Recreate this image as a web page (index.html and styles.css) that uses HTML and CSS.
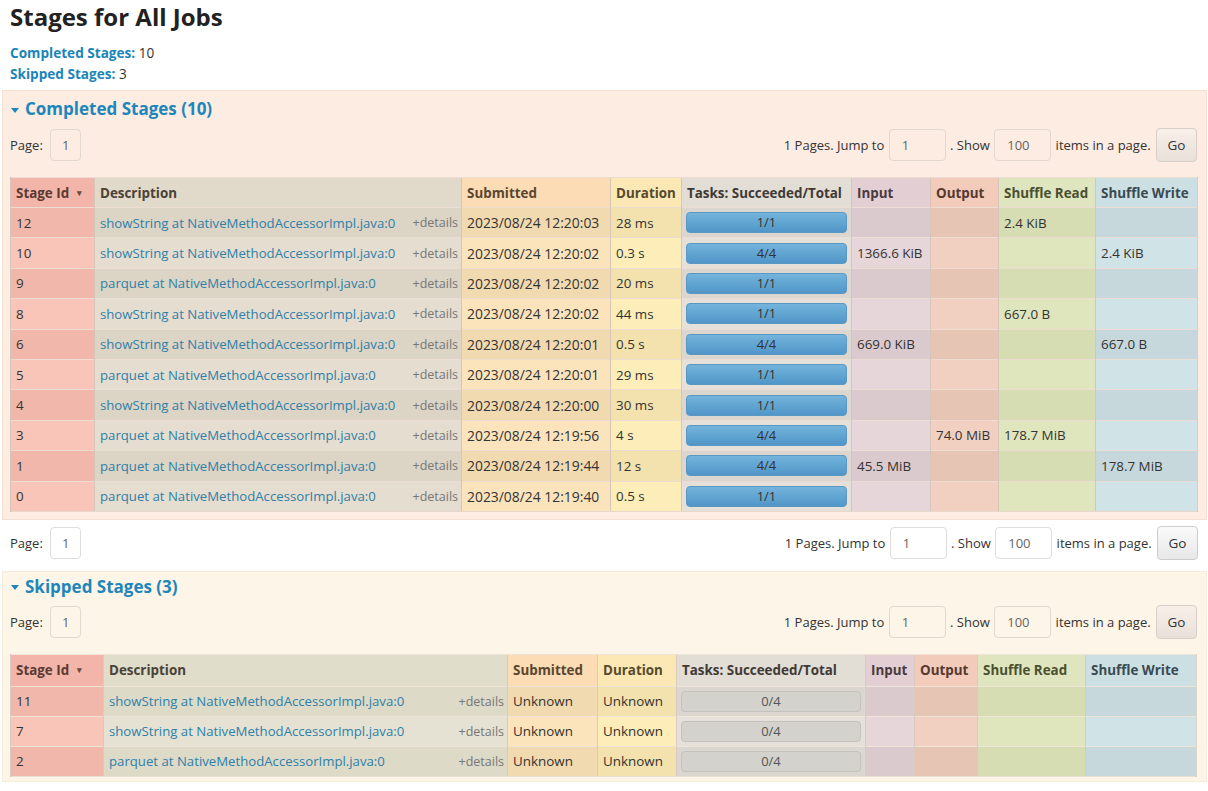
FILE: index.html
```html
<!DOCTYPE html>
<html>
<head>
<meta charset="utf-8">
<title>Stages for All Jobs</title>
<link rel="stylesheet" href="styles.css">
</head>
<body>
<div class="page">
  <h3 class="title">Stages for All Jobs</h3>
  <ul class="summary">
    <li><a class="sum-link">Completed Stages:</a> 10</li>
    <li><a class="sum-link">Skipped Stages:</a> 3</li>
  </ul>

  <section class="box box-completed">
    <h4 class="box-head"><span class="caret"></span>Completed Stages (10)</h4>
    <div class="pager">
      <div class="pager-left">Page: <span class="inp inp-page">1</span></div>
      <div class="pager-right">1 Pages. Jump to <span class="inp inp-jump">1</span> . Show <span class="inp inp-jump">100</span> items in a page. <span class="btn">Go</span></div>
    </div>
    <table class="stages">
      <colgroup>
        <col class="w-id"><col class="w-desc"><col class="w-sub"><col class="w-dur"><col class="w-task"><col class="w-in"><col class="w-out"><col class="w-sr"><col class="w-sw">
      </colgroup>
      <thead>
        <tr>
          <th class="c-id">Stage Id <span class="sort">&#9662;</span></th>
          <th class="c-desc">Description</th>
          <th class="c-sub">Submitted</th>
          <th class="c-dur">Duration</th>
          <th class="c-task">Tasks: Succeeded/Total</th>
          <th class="c-in">Input</th>
          <th class="c-out">Output</th>
          <th class="c-sr">Shuffle Read</th>
          <th class="c-sw">Shuffle Write</th>
        </tr>
      </thead>
      <tbody>
        <tr><td class="c-id">12</td><td class="c-desc"><div class="desc"><a class="dlink">showString at NativeMethodAccessorImpl.java:0</a><span class="details">+details</span></div></td><td class="c-sub">2023/08/24 12:20:03</td><td class="c-dur">28 ms</td><td class="c-task"><div class="bar">1/1</div></td><td class="c-in"></td><td class="c-out"></td><td class="c-sr">2.4 KiB</td><td class="c-sw"></td></tr>
        <tr><td class="c-id">10</td><td class="c-desc"><div class="desc"><a class="dlink">showString at NativeMethodAccessorImpl.java:0</a><span class="details">+details</span></div></td><td class="c-sub">2023/08/24 12:20:02</td><td class="c-dur">0.3 s</td><td class="c-task"><div class="bar">4/4</div></td><td class="c-in">1366.6 KiB</td><td class="c-out"></td><td class="c-sr"></td><td class="c-sw">2.4 KiB</td></tr>
        <tr><td class="c-id">9</td><td class="c-desc"><div class="desc"><a class="dlink">parquet at NativeMethodAccessorImpl.java:0</a><span class="details">+details</span></div></td><td class="c-sub">2023/08/24 12:20:02</td><td class="c-dur">20 ms</td><td class="c-task"><div class="bar">1/1</div></td><td class="c-in"></td><td class="c-out"></td><td class="c-sr"></td><td class="c-sw"></td></tr>
        <tr><td class="c-id">8</td><td class="c-desc"><div class="desc"><a class="dlink">showString at NativeMethodAccessorImpl.java:0</a><span class="details">+details</span></div></td><td class="c-sub">2023/08/24 12:20:02</td><td class="c-dur">44 ms</td><td class="c-task"><div class="bar">1/1</div></td><td class="c-in"></td><td class="c-out"></td><td class="c-sr">667.0 B</td><td class="c-sw"></td></tr>
        <tr><td class="c-id">6</td><td class="c-desc"><div class="desc"><a class="dlink">showString at NativeMethodAccessorImpl.java:0</a><span class="details">+details</span></div></td><td class="c-sub">2023/08/24 12:20:01</td><td class="c-dur">0.5 s</td><td class="c-task"><div class="bar">4/4</div></td><td class="c-in">669.0 KiB</td><td class="c-out"></td><td class="c-sr"></td><td class="c-sw">667.0 B</td></tr>
        <tr><td class="c-id">5</td><td class="c-desc"><div class="desc"><a class="dlink">parquet at NativeMethodAccessorImpl.java:0</a><span class="details">+details</span></div></td><td class="c-sub">2023/08/24 12:20:01</td><td class="c-dur">29 ms</td><td class="c-task"><div class="bar">1/1</div></td><td class="c-in"></td><td class="c-out"></td><td class="c-sr"></td><td class="c-sw"></td></tr>
        <tr><td class="c-id">4</td><td class="c-desc"><div class="desc"><a class="dlink">showString at NativeMethodAccessorImpl.java:0</a><span class="details">+details</span></div></td><td class="c-sub">2023/08/24 12:20:00</td><td class="c-dur">30 ms</td><td class="c-task"><div class="bar">1/1</div></td><td class="c-in"></td><td class="c-out"></td><td class="c-sr"></td><td class="c-sw"></td></tr>
        <tr><td class="c-id">3</td><td class="c-desc"><div class="desc"><a class="dlink">parquet at NativeMethodAccessorImpl.java:0</a><span class="details">+details</span></div></td><td class="c-sub">2023/08/24 12:19:56</td><td class="c-dur">4 s</td><td class="c-task"><div class="bar">4/4</div></td><td class="c-in"></td><td class="c-out">74.0 MiB</td><td class="c-sr">178.7 MiB</td><td class="c-sw"></td></tr>
        <tr><td class="c-id">1</td><td class="c-desc"><div class="desc"><a class="dlink">parquet at NativeMethodAccessorImpl.java:0</a><span class="details">+details</span></div></td><td class="c-sub">2023/08/24 12:19:44</td><td class="c-dur">12 s</td><td class="c-task"><div class="bar">4/4</div></td><td class="c-in">45.5 MiB</td><td class="c-out"></td><td class="c-sr"></td><td class="c-sw">178.7 MiB</td></tr>
        <tr><td class="c-id">0</td><td class="c-desc"><div class="desc"><a class="dlink">parquet at NativeMethodAccessorImpl.java:0</a><span class="details">+details</span></div></td><td class="c-sub">2023/08/24 12:19:40</td><td class="c-dur">0.5 s</td><td class="c-task"><div class="bar">1/1</div></td><td class="c-in"></td><td class="c-out"></td><td class="c-sr"></td><td class="c-sw"></td></tr>
      </tbody>
    </table>
  </section>

  <div class="pager pager-outside">
    <div class="pager-left">Page: <span class="inp inp-page">1</span></div>
    <div class="pager-right">1 Pages. Jump to <span class="inp inp-jump">1</span> . Show <span class="inp inp-jump">100</span> items in a page. <span class="btn">Go</span></div>
  </div>

  <section class="box box-skipped">
    <h4 class="box-head"><span class="caret"></span>Skipped Stages (3)</h4>
    <div class="pager">
      <div class="pager-left">Page: <span class="inp inp-page">1</span></div>
      <div class="pager-right">1 Pages. Jump to <span class="inp inp-jump">1</span> . Show <span class="inp inp-jump">100</span> items in a page. <span class="btn">Go</span></div>
    </div>
    <table class="stages skipped">
      <colgroup>
        <col class="s-id"><col class="s-desc"><col class="s-sub"><col class="s-dur"><col class="s-task"><col class="s-in"><col class="s-out"><col class="s-sr"><col class="s-sw">
      </colgroup>
      <thead>
        <tr>
          <th class="c-id">Stage Id <span class="sort">&#9662;</span></th>
          <th class="c-desc">Description</th>
          <th class="c-sub">Submitted</th>
          <th class="c-dur">Duration</th>
          <th class="c-task">Tasks: Succeeded/Total</th>
          <th class="c-in">Input</th>
          <th class="c-out">Output</th>
          <th class="c-sr">Shuffle Read</th>
          <th class="c-sw">Shuffle Write</th>
        </tr>
      </thead>
      <tbody>
        <tr><td class="c-id">11</td><td class="c-desc"><div class="desc"><a class="dlink">showString at NativeMethodAccessorImpl.java:0</a><span class="details">+details</span></div></td><td class="c-sub">Unknown</td><td class="c-dur">Unknown</td><td class="c-task"><div class="bar bar-empty">0/4</div></td><td class="c-in"></td><td class="c-out"></td><td class="c-sr"></td><td class="c-sw"></td></tr>
        <tr><td class="c-id">7</td><td class="c-desc"><div class="desc"><a class="dlink">showString at NativeMethodAccessorImpl.java:0</a><span class="details">+details</span></div></td><td class="c-sub">Unknown</td><td class="c-dur">Unknown</td><td class="c-task"><div class="bar bar-empty">0/4</div></td><td class="c-in"></td><td class="c-out"></td><td class="c-sr"></td><td class="c-sw"></td></tr>
        <tr><td class="c-id">2</td><td class="c-desc"><div class="desc"><a class="dlink">parquet at NativeMethodAccessorImpl.java:0</a><span class="details">+details</span></div></td><td class="c-sub">Unknown</td><td class="c-dur">Unknown</td><td class="c-task"><div class="bar bar-empty">0/4</div></td><td class="c-in"></td><td class="c-out"></td><td class="c-sr"></td><td class="c-sw"></td></tr>
      </tbody>
    </table>
  </section>
</div>
</body>
</html>
```

FILE: styles.css
```css
* { box-sizing: border-box; }
html, body { margin: 0; padding: 0; background: #fff; }
body {
  font-family: "Open Sans", "Liberation Sans", sans-serif;
  font-size: 13px;
  color: #333;
}
.page { padding: 0 1px 0 2px; }
.title {
  margin: 0;
  padding: 1px 8px 0;
  font-size: 24px;
  line-height: 32px;
  font-weight: 700;
  color: #222;
}
.summary {
  list-style: none;
  margin: 9px 0 0;
  padding: 0 8px;
  font-size: 13.6px;
  line-height: 21px;
}
.sum-link { color: #1b84b8; font-weight: 700; }

.box {
  margin-top: 6px;
  border: 1px solid #f6e0d2;
  padding: 0 9px 7px 7px;
}
.box-completed { background: #fcece1; }
.box-skipped { background: #fdf5e7; border-color: #f7ecdc; margin-top: 11px; padding-bottom: 4px; }
.box-head {
  margin: 0;
  padding-top: 6px;
  font-size: 17px;
  line-height: 24px;
  font-weight: 700;
  color: #1e86ba;
  display: flex;
  align-items: center;
}
.box-skipped .box-head { padding-top: 3px; }
.caret {
  display: inline-block;
  width: 0; height: 0;
  border-left: 4px solid transparent;
  border-right: 4px solid transparent;
  border-top: 5px solid #1e86ba;
  margin: 2px 6px 0 1px;
}
.pager {
  display: flex;
  justify-content: space-between;
  align-items: center;
  margin-top: 7px;
  height: 33px;
}
.pager-outside { padding: 0 9px 0 8px; margin-top: 7px; }
.pager-left, .pager-right { display: flex; align-items: center; white-space: pre; }
.inp {
  display: inline-flex;
  align-items: center;
  height: 32px;
  border: 1px solid #e2d8d0;
  border-radius: 4px;
  color: #666;
  font-size: 13px;
}
.pager-outside .inp { border-color: #ddd; }
.inp-page { width: 31px; justify-content: center; margin-left: 4px; }
.inp-jump { width: 57px; padding-left: 12px; margin: 0 1px; }
.btn {
  display: inline-flex;
  align-items: center;
  justify-content: center;
  width: 41px;
  height: 34px;
  border: 1px solid #d8cfc8;
  border-radius: 4px;
  background: linear-gradient(#f8efe9, #e9e0da);
  color: #333;
  margin-left: 2px;
  font-size: 13.5px;
}
.pager-outside .btn { background: linear-gradient(#fafafa, #e8e8e8); border-color: #ccc; }

.stages {
  table-layout: fixed;
  border-collapse: collapse;
  margin-top: 16px;
  width: 1187px;
  border-top: 1px solid #efe2d6;
}
.skipped { margin-top: 15px; width: 1186px; }
.w-id { width: 84px; } .w-desc { width: 367px; } .w-sub { width: 149px; } .w-dur { width: 71px; }
.w-task { width: 170px; } .w-in { width: 79px; } .w-out { width: 68px; } .w-sr { width: 97px; } .w-sw { width: 102px; }
.s-id { width: 93px; } .s-desc { width: 404px; } .s-sub { width: 90px; } .s-dur { width: 79px; }
.s-task { width: 189px; } .s-in { width: 49px; } .s-out { width: 63px; } .s-sr { width: 108px; } .s-sw { width: 111px; }

.stages th, .stages td {
  padding: 0 5px;
  height: 30.4px;
  text-align: left;
  white-space: nowrap;
  overflow: hidden;
  border-left: 1px solid rgba(90, 60, 40, 0.22);
  border-top: 1px solid rgba(90, 70, 50, 0.09);
  font-size: 13.4px;
}
.stages td.c-sub { font-size: 13.9px; }
.skipped td.c-sub { font-size: 13.4px; }
.stages th { font-weight: 700; height: 30px; color: #3d3530; }
.skipped th { height: 32px; }
.skipped td { height: 30px; }
.stages tr > :last-child { border-right: 1px solid rgba(90, 60, 40, 0.18); }
.stages tbody tr:last-child td { border-bottom: 1px solid rgba(90, 70, 50, 0.12); }
.sort { font-size: 9px; color: #6b4a42; margin-left: 4px; vertical-align: 2px; }

th.c-id { background: #f3b5a9; color: #5a3a32; }
th.c-desc { background: #e1d9c9; color: #4a4236; }
th.c-sub { background: #fbdcb4; color: #5a4630; }
th.c-dur { background: #fbe8b5; color: #574a2c; }
th.c-task { background: #e2ddd5; color: #3f3a35; }
th.c-in { background: #e3cfd3; color: #4a3a3d; }
th.c-out { background: #f2cbbb; color: #55392e; }
th.c-sr { background: #dfe6bf; color: #4a5030; }
th.c-sw { background: #cce0e4; color: #3a4a50; }

tbody tr:nth-child(odd) .c-id { background: #f2b7ab; }
tbody tr:nth-child(even) .c-id { background: #f9c5b9; }
tbody tr:nth-child(odd) .c-desc { background: #dcd4c4; }
tbody tr:nth-child(even) .c-desc { background: #e5ddcf; }
tbody tr:nth-child(odd) .c-sub { background: #f2dab0; }
tbody tr:nth-child(even) .c-sub { background: #fbe4bc; }
tbody tr:nth-child(odd) .c-dur { background: #f3e2ad; }
tbody tr:nth-child(even) .c-dur { background: #fcedb9; }
tbody tr:nth-child(odd) .c-task { background: #dbd6cf; }
tbody tr:nth-child(even) .c-task { background: #e5e0d9; }
tbody tr:nth-child(odd) .c-in { background: #dbcacd; }
tbody tr:nth-child(even) .c-in { background: #e6d6d9; }
tbody tr:nth-child(odd) .c-out { background: #e7c5b5; }
tbody tr:nth-child(even) .c-out { background: #f1d0c1; }
tbody tr:nth-child(odd) .c-sr { background: #d6ddb2; }
tbody tr:nth-child(even) .c-sr { background: #dfe6bd; }
tbody tr:nth-child(odd) .c-sw { background: #c6d8dc; }
tbody tr:nth-child(even) .c-sw { background: #d0e3e7; }

.skipped th.c-desc { background: #e0ddcb; }
.skipped tbody tr:nth-child(odd) .c-desc { background: #dddac8; }
.skipped tbody tr:nth-child(even) .c-desc { background: #e5e2d3; }

.desc { display: flex; justify-content: space-between; align-items: center; }
.dlink { color: #2f80a8; font-size: 13.2px; }
.stages td.c-desc { padding-right: 3px; }
.details { color: #777; font-size: 12.5px; }

.bar {
  height: 21px;
  line-height: 19px;
  border-radius: 4px;
  text-align: center;
  font-size: 13px;
  color: #333;
  background: linear-gradient(#74b4dc, #5096c8);
  border: 1px solid #5a98c4;
}
.stages td.c-task { padding: 0 4px; }
.bar-empty {
  background: #d3d2cc;
  border-color: #c4c2bc;
  color: #555;
}
```
